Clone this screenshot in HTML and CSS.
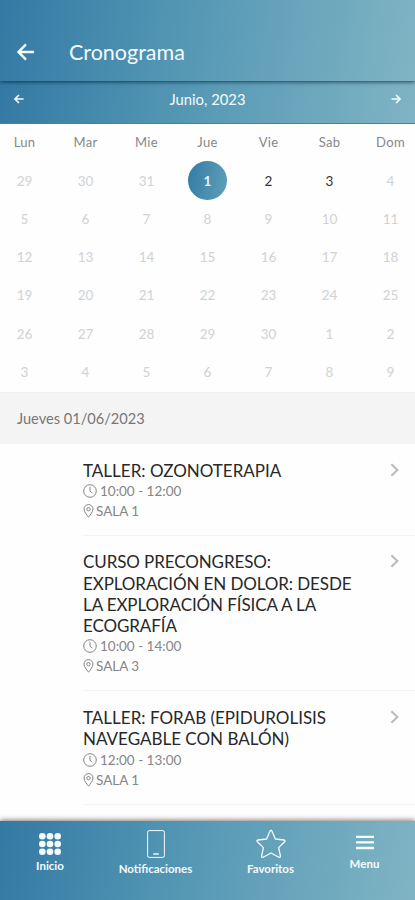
FILE: index.html
```html
<!DOCTYPE html>
<html lang="es">
<head>
<meta charset="utf-8">
<meta name="viewport" content="width=device-width, initial-scale=1">
<title>Cronograma</title>
<link rel="stylesheet" href="styles.css">
</head>
<body>
<svg class="defs" width="0" height="0" aria-hidden="true">
  <symbol id="clock" viewBox="0 0 14 14"><circle cx="7" cy="7" r="6.3"/><path d="M7 2.8V7.2L9.3 9"/></symbol>
  <symbol id="pin" viewBox="0 0 11 14"><path d="M5.5 13.2C4.4 11.5 1 8 1 5.1a4.5 4.5 0 0 1 9 0C10 8 6.6 11.5 5.5 13.2Z"/><circle cx="5.5" cy="5.2" r="1.7"/></symbol>
  <symbol id="chevron" viewBox="0 0 9 14"><path d="M1.4 1.2L7.4 7L1.4 12.8"/></symbol>
</svg>
<div class="app">
  <header class="topbar">
    <svg class="back" viewBox="0 0 18 18"><path d="M17 9H2M9 1.3L1.5 9L9 16.7"/></svg>
    <h1>Cronograma</h1>
  </header>
  <div class="monthbar">
    <svg class="arrow" viewBox="0 0 10 10"><path d="M9.5 5H1M5 1L1 5L5 9"/></svg>
    <span>Junio, 2023</span>
    <svg class="arrow" viewBox="0 0 10 10"><path d="M.5 5H9M5 1L9 5L5 9"/></svg>
  </div>
  <section class="calendar">
    <div class="week names"><span>Lun</span><span>Mar</span><span>Mie</span><span>Jue</span><span>Vie</span><span>Sab</span><span>Dom</span></div>
    <div class="week"><span>29</span><span>30</span><span>31</span><span class="selected">1</span><span class="active">2</span><span class="active">3</span><span>4</span></div>
    <div class="week"><span>5</span><span>6</span><span>7</span><span>8</span><span>9</span><span>10</span><span>11</span></div>
    <div class="week"><span>12</span><span>13</span><span>14</span><span>15</span><span>16</span><span>17</span><span>18</span></div>
    <div class="week"><span>19</span><span>20</span><span>21</span><span>22</span><span>23</span><span>24</span><span>25</span></div>
    <div class="week"><span>26</span><span>27</span><span>28</span><span>29</span><span>30</span><span>1</span><span>2</span></div>
    <div class="week"><span>3</span><span>4</span><span>5</span><span>6</span><span>7</span><span>8</span><span>9</span></div>
  </section>
  <h2 class="day">Jueves 01/06/2023</h2>
  <main class="events">
    <article class="event">
      <div class="info">
        <h3>TALLER: OZONOTERAPIA</h3>
        <p><svg class="clock"><use href="#clock"/></svg>10:00 - 12:00</p>
        <p><svg class="pin"><use href="#pin"/></svg>SALA 1</p>
      </div>
      <svg class="chevron"><use href="#chevron"/></svg>
    </article>
    <article class="event">
      <div class="info">
        <h3 class="long">CURSO PRECONGRESO:<br>EXPLORACIÓN EN DOLOR: DESDE<br>LA EXPLORACIÓN FÍSICA A LA<br>ECOGRAFÍA</h3>
        <p><svg class="clock"><use href="#clock"/></svg>10:00 - 14:00</p>
        <p><svg class="pin"><use href="#pin"/></svg>SALA 3</p>
      </div>
      <svg class="chevron"><use href="#chevron"/></svg>
    </article>
    <article class="event">
      <div class="info">
        <h3>TALLER: FORAB (EPIDUROLISIS<br>NAVEGABLE CON BALÓN)</h3>
        <p><svg class="clock"><use href="#clock"/></svg>12:00 - 13:00</p>
        <p><svg class="pin"><use href="#pin"/></svg>SALA 1</p>
      </div>
      <svg class="chevron"><use href="#chevron"/></svg>
    </article>
  </main>
  <nav class="tabs">
    <a class="tab home">
      <svg width="22" height="22" viewBox="0 0 22 22" fill="currentColor"><circle cx="3.3" cy="3.3" r="3.3"/><circle cx="11" cy="3.3" r="3.3"/><circle cx="18.7" cy="3.3" r="3.3"/><circle cx="3.3" cy="11" r="3.3"/><circle cx="11" cy="11" r="3.3"/><circle cx="18.7" cy="11" r="3.3"/><circle cx="3.3" cy="18.7" r="3.3"/><circle cx="11" cy="18.7" r="3.3"/><circle cx="18.7" cy="18.7" r="3.3"/></svg>
      <span>Inicio</span>
    </a>
    <a class="tab notices">
      <svg width="18" height="28" viewBox="0 0 18 28" fill="none" stroke="currentColor"><rect x=".6" y=".6" width="16.8" height="26.8" rx="1.6"/><path d="M6.2 24H11.8" stroke-width="1.4"/></svg>
      <span>Notificaciones</span>
    </a>
    <a class="tab favs">
      <svg width="30" height="30" viewBox="0 0 30 30" fill="none" stroke="currentColor" stroke-width="1.3" stroke-linejoin="round"><path d="M14.2 1.8Q15 .6 15.8 1.8L19.4 10L28 11Q29.8 11.4 28.6 12.7L22.6 18.6L24.4 27Q24.5 28.8 22.9 28.2L15 24L7.1 28.2Q5.5 28.8 5.6 27L7.4 18.6L1.4 12.7Q.2 11.4 2 11L10.6 10Z"/></svg>
      <span>Favoritos</span>
    </a>
    <a class="tab menu">
      <svg width="18" height="15" viewBox="0 0 18 15" stroke="currentColor" stroke-width="2.3"><path d="M0 1.8H18M0 7.4H18M0 13H18"/></svg>
      <span>Menu</span>
    </a>
  </nav>
</div>
</body>
</html>
```

FILE: styles.css
```css
* { box-sizing: border-box; }
body { margin: 0; background: #fefefe; font-family: Lato, "Liberation Sans", sans-serif; }
h1, h2, h3, p { margin: 0; font-weight: 400; }
svg { flex: none; }
.defs { position: absolute; }
.app { height: 900px; display: flex; flex-direction: column; overflow: hidden; }
.topbar, .monthbar, .tabs { background: linear-gradient(100deg, #3479a4 0%, #5497b4 44%, #80b4c4 100%); color: #f4fbfd; flex: none; }
.topbar { height: 81px; padding: 22px 17px 0; display: flex; align-items: center; gap: 34px; box-shadow: 0 1px 4px rgba(0, 30, 50, .75); z-index: 1; }
.back { width: 18px; height: 18px; fill: none; stroke: currentColor; stroke-width: 2.4; }
h1 { font-size: 21.5px; line-height: 26px; }
.monthbar { height: 43px; padding: 0 14px 6px; display: flex; align-items: center; justify-content: space-between; font-size: 14.8px; border-bottom: 1px solid #3b86a9; }
.arrow { width: 10px; height: 10px; fill: none; stroke: currentColor; stroke-width: 1.6; }
.calendar { flex: none; height: 268px; margin: 0 -6px; }
.week { display: grid; grid-template-columns: repeat(7, 1fr); height: 38.4px; align-items: center; justify-items: center; font-size: 13.5px; color: #d0d2d3; }
.names { height: 37px; padding-bottom: 2px; font-size: 13px; color: #85888a; letter-spacing: .3px; }
.week .active { color: #333; }
.week .selected { width: 39px; height: 39px; border-radius: 50%; background: linear-gradient(100deg, #347ba4, #609fba); color: #e9f4f8; display: grid; place-items: center; font-weight: 700; }
.day { flex: none; height: 52px; background: #f4f4f4; color: #777; padding-left: 17px; font-size: 14.6px; line-height: 51px; border-top: 1px solid #efefef; }
.events { flex: 1; margin-left: 83px; }
.event { display: flex; justify-content: space-between; border-bottom: 1px solid #f3f3f3; padding: 15.5px 16px 14px 0; }
h3 { font-size: 17px; line-height: 21.3px; color: #282828; white-space: nowrap; }
h3.long { letter-spacing: -.1px; }
.event p { display: flex; align-items: center; height: 20px; font-size: 13.5px; color: #858585; }
.clock { width: 14px; height: 14px; margin-right: 3px; }
.pin { width: 11px; height: 14px; margin-right: 2px; }
.clock, .pin { fill: none; stroke: #858585; stroke-width: 1; }
.chevron { width: 9px; height: 14px; margin-top: 3px; fill: none; stroke: #bababa; stroke-width: 2; }
.tabs { height: 79px; display: flex; box-shadow: 0 -1px 5px rgba(50, 35, 30, .6); z-index: 1; padding-right: 1px; }
.tab { display: flex; flex-direction: column; align-items: center; font-size: 11.5px; line-height: 14px; font-weight: 700; }
.home { width: 100px; padding-top: 12px; gap: 4px; }
.notices { width: 111px; padding-top: 9px; gap: 4px; }
.favs { width: 119px; padding-top: 8px; gap: 3px; }
.menu { width: 69px; padding-top: 14px; gap: 7px; }
```
